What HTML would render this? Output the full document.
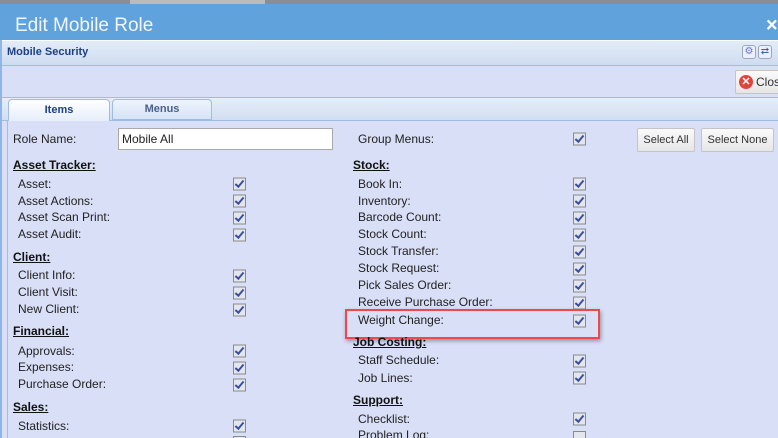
<!DOCTYPE html>
<html style="overflow:hidden;width:778px;height:438px"><head><style>
body{margin:0;width:778px;height:438px;overflow:hidden;background:#d9dff6;font-family:"Liberation Sans",Arial,sans-serif;font-size:12px;color:#222;position:relative}
.a{position:absolute;white-space:nowrap}
.t{transform:translateY(-50%)}
.h{font-weight:bold;text-decoration:underline;color:#111}
.cb{position:absolute;width:11px;height:11px;border:1px solid #8a8a8a;background:#e4e6ee;transform:translateY(-50%)}
.cb:after{content:"";position:absolute;left:3px;top:0px;width:3px;height:7px;border:solid #3a4fa0;border-width:0 2px 2px 0;transform:rotate(40deg)}
.btn{position:absolute;height:22px;border:1px solid #c4c4c4;border-radius:2px;background:linear-gradient(#fafafa,#e6e6e6);font-size:11px;line-height:22px;text-align:center;color:#333;white-space:nowrap;overflow:hidden}
</style></head><body>
<div class="a" style="left:0;top:0;width:778px;height:4px;background:#8a8d96"></div>
<div class="a" style="left:130px;top:0;width:135px;height:4px;background:#bbb"></div>
<div class="a" style="left:0;top:4px;width:778px;height:36px;background:#5fa2dc"></div>
<div class="a t" style="left:15px;top:26px;font-size:19px;color:#f2f6fb">Edit Mobile Role</div>
<div class="a t" style="left:766px;top:26px;font-size:20px;color:#fff;font-weight:bold">×</div>
<div class="a" style="left:2px;top:40px;width:776px;height:24px;background:linear-gradient(#e3ecf8,#cfdcf0);border-top:1px solid #fff;border-bottom:1px solid #9dbde6"></div>
<div class="a t" style="left:7px;top:52px;font-weight:bold;font-size:11px;color:#1c3f86">Mobile Security</div>
<div class="a" style="left:742px;top:45px;width:12px;height:12px;border:1px solid #9ab;border-radius:3px;background:#eef;color:#67c;font-size:10px;line-height:12px;text-align:center">⚙</div>
<div class="a" style="left:758px;top:45px;width:12px;height:12px;border:1px solid #9ab;border-radius:3px;background:#eef;color:#36a;font-size:10px;line-height:12px;text-align:center">⇄</div>
<div class="a" style="left:0;top:40px;width:2px;height:398px;background:#8fb6e6"></div>
<div class="a" style="left:2px;top:97px;width:776px;height:22px;background:linear-gradient(#e6eef9,#d2def1);border-top:1px solid #9dbde6;border-bottom:1px solid #9dbde6"></div>
<div class="btn" style="left:735px;top:70px;width:50px;text-align:left;font-size:12px"><span style="display:inline-block;width:14px;height:14px;border-radius:50%;background:#e0453c;color:#fff;font-size:11px;line-height:14px;text-align:center;margin:4px 3px 0 3px;vertical-align:top;font-weight:bold">✕</span>Close</div>
<div class="a" style="left:8px;top:99px;width:100px;height:21px;border:1px solid #9dbde6;border-bottom:none;border-radius:4px 4px 0 0;background:linear-gradient(#fff,#e6eefa);text-align:center;line-height:21px;font-weight:bold;font-size:11px;color:#1c3f86">Items</div>
<div class="a" style="left:112px;top:99px;width:98px;height:19px;border:1px solid #9dbde6;border-radius:4px 4px 0 0;background:linear-gradient(#eef4fc,#d6e3f6);text-align:center;line-height:19px;font-weight:bold;font-size:11px;color:#4a5f8c">Menus</div>
<div class="a" style="left:7px;top:120px;width:1px;height:318px;background:#9dbde6"></div>
<div class="a t" style="left:13px;top:139px">Role Name:</div>
<div class="a" style="left:118px;top:128px;width:210px;height:20px;border:1px solid #a9a9a9;background:#fff;line-height:20px;padding-left:3px">Mobile All</div>
<div class="a t" style="left:358px;top:139px">Group Menus:</div>
<div class="cb" style="left:573px;top:139px"></div>
<div class="btn" style="left:637px;top:128px;width:56px">Select All</div>
<div class="btn" style="left:701px;top:128px;width:71px">Select None</div>

<div class="a t h" style="left:13px;top:165px">Asset Tracker:</div>
<div class="a t" style="left:18px;top:184px">Asset:</div><div class="cb" style="left:233px;top:184px"></div>
<div class="a t" style="left:18px;top:201px">Asset Actions:</div><div class="cb" style="left:233px;top:201px"></div>
<div class="a t" style="left:18px;top:217px">Asset Scan Print:</div><div class="cb" style="left:233px;top:218px"></div>
<div class="a t" style="left:18px;top:234px">Asset Audit:</div><div class="cb" style="left:233px;top:235px"></div>
<div class="a t h" style="left:13px;top:257px">Client:</div>
<div class="a t" style="left:18px;top:275px">Client Info:</div><div class="cb" style="left:233px;top:276px"></div>
<div class="a t" style="left:18px;top:292px">Client Visit:</div><div class="cb" style="left:233px;top:293px"></div>
<div class="a t" style="left:18px;top:309px">New Client:</div><div class="cb" style="left:233px;top:310px"></div>
<div class="a t h" style="left:13px;top:331px">Financial:</div>
<div class="a t" style="left:18px;top:351px">Approvals:</div><div class="cb" style="left:233px;top:351px"></div>
<div class="a t" style="left:18px;top:367px">Expenses:</div><div class="cb" style="left:233px;top:368px"></div>
<div class="a t" style="left:18px;top:384px">Purchase Order:</div><div class="cb" style="left:233px;top:385px"></div>
<div class="a t h" style="left:13px;top:407px">Sales:</div>
<div class="a t" style="left:18px;top:426px">Statistics:</div><div class="cb" style="left:233px;top:426px"></div>
<div class="a" style="left:233px;top:436px;width:11px;height:2px;border:1px solid #8a8a8a;border-bottom:none;background:#e4e6ee"></div>

<div class="a t h" style="left:353px;top:165px">Stock:</div>
<div class="a t" style="left:358px;top:184px">Book In:</div><div class="cb" style="left:573px;top:184px"></div>
<div class="a t" style="left:358px;top:201px">Inventory:</div><div class="cb" style="left:573px;top:201px"></div>
<div class="a t" style="left:358px;top:217px">Barcode Count:</div><div class="cb" style="left:573px;top:218px"></div>
<div class="a t" style="left:358px;top:234px">Stock Count:</div><div class="cb" style="left:573px;top:235px"></div>
<div class="a t" style="left:358px;top:251px">Stock Transfer:</div><div class="cb" style="left:573px;top:252px"></div>
<div class="a t" style="left:358px;top:268px">Stock Request:</div><div class="cb" style="left:573px;top:269px"></div>
<div class="a t" style="left:358px;top:285px">Pick Sales Order:</div><div class="cb" style="left:573px;top:286px"></div>
<div class="a t" style="left:358px;top:302px">Receive Purchase Order:</div><div class="cb" style="left:573px;top:303px"></div>
<div class="a t" style="left:358px;top:320px">Weight Change:</div><div class="cb" style="left:573px;top:321px"></div>
<div class="a" style="left:345px;top:309px;width:251px;height:26px;border:2px solid #f0484a;box-shadow:1px 2px 4px rgba(0,0,0,.35)"></div>
<div class="a t h" style="left:353px;top:342px">Job Costing:</div>
<div class="a t" style="left:358px;top:360px">Staff Schedule:</div><div class="cb" style="left:573px;top:361px"></div>
<div class="a t" style="left:358px;top:378px">Job Lines:</div><div class="cb" style="left:573px;top:378px"></div>
<div class="a t h" style="left:353px;top:400px">Support:</div>
<div class="a t" style="left:358px;top:419px">Checklist:</div><div class="cb" style="left:573px;top:419px"></div>
<div class="a t" style="left:358px;top:435px">Problem Log:</div><div class="a" style="left:573px;top:431px;width:11px;height:7px;border:1px solid #8a8a8a;border-bottom:none;background:#e4e6ee"></div>
</body></html>
